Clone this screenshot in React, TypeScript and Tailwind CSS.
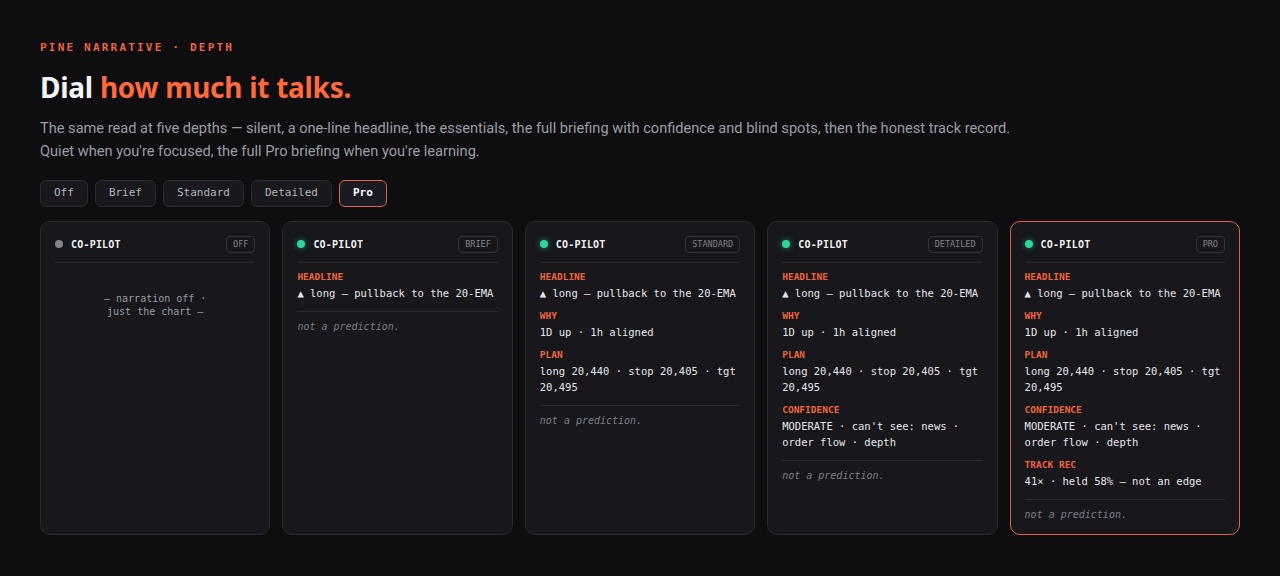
import React from 'react';

const mono = "font-['DejaVu_Sans_Mono','Liberation_Mono',monospace]";

interface Section {
    label: string;
    lines: string[];
}

interface Depth {
    key: string;
    badge: string;
    sections: Section[];
}

const headline: Section = { label: 'HEADLINE', lines: ['▲ long — pullback to the 20-EMA'] };
const why: Section = { label: 'WHY', lines: ['1D up · 1h aligned'] };
const plan: Section = { label: 'PLAN', lines: ['long 20,440 · stop 20,405 · tgt 20,495'] };
const confidence: Section = { label: 'CONFIDENCE', lines: ["MODERATE · can't see: news · order flow · depth"] };
const track: Section = { label: 'TRACK REC', lines: ['41× · held 58% — not an edge'] };

const depths: Depth[] = [
    { key: 'Off', badge: 'OFF', sections: [] },
    { key: 'Brief', badge: 'BRIEF', sections: [headline] },
    { key: 'Standard', badge: 'STANDARD', sections: [headline, why, plan] },
    { key: 'Detailed', badge: 'DETAILED', sections: [headline, why, plan, confidence] },
    { key: 'Pro', badge: 'PRO', sections: [headline, why, plan, confidence, track] },
];

function Card({ depth, active }: { depth: Depth; active: boolean }) {
    const off = depth.key === 'Off';
    return (
        <div
            className={`rounded-[10px] border bg-[#17171c] px-[14px] pt-[14px] pb-[11px] ${
                active ? 'border-[#e0653f]' : 'border-[#2a2a31]'
            }`}
        >
            <div className="flex items-center justify-between pb-[9px] border-b border-[#2c2c33]">
                <div className="flex items-center gap-[8px]">
                    <span
                        className={`w-[8px] h-[8px] rounded-full ${
                            off ? 'bg-[#85858c]' : 'bg-[#2fd49b] shadow-[0_0_6px_rgba(47,212,155,0.6)]'
                        }`}
                    />
                    <span className={`${mono} text-[10px] font-bold text-[#f1f1f3] tracking-[0.02em]`}>CO-PILOT</span>
                </div>
                <span
                    className={`${mono} text-[8.5px] leading-none text-[#808088] border border-[#34343b] rounded-[4px] px-[6px] py-[3.5px]`}
                >
                    {depth.badge}
                </span>
            </div>

            {off ? (
                <div className={`${mono} text-[10px] leading-[13px] text-[#9a9aa2] text-center pt-[29px]`}>
                    — narration off ·<br />just the chart —
                </div>
            ) : (
                <div className={mono}>
                    <div className="pt-[7px] pb-[10px] border-b border-[#2c2c33] flex flex-col gap-[8px]">
                        {depth.sections.map((s) => (
                            <div key={s.label}>
                                <div className="text-[9.5px] font-bold text-[#f0643c] leading-[14px]">{s.label}</div>
                                <div className="text-[10.5px] text-[#e6e6ea] leading-[16px] mt-[1px]">
                                    {s.lines.map((l) => (
                                        <div key={l}>{l}</div>
                                    ))}
                                </div>
                            </div>
                        ))}
                    </div>
                    <div className="pt-[7px] text-[10px] italic text-[#7e7e86] leading-[16px]">not a prediction.</div>
                </div>
            )}
        </div>
    );
}

export default function App() {
    const active = 'Pro';
    return (
        <div className="min-h-[576px] w-full bg-[#0e0e11] px-10 pt-[40px] font-['Noto_Sans','Open_Sans',sans-serif]">
            <div className={`${mono} text-[11px] font-bold tracking-[0.2em] text-[#f0643c]`}>PINE NARRATIVE · DEPTH</div>
            <h1 className="mt-[12px] text-[28px] font-bold leading-[36px] tracking-[-0.01em] text-[#f4f4f6]">
                Dial <span className="text-[#ff6a3d]">how much it talks.</span>
            </h1>
            <p className="mt-[12px] font-['Roboto',sans-serif] text-[14.6px] leading-[23px] text-[#9c9ca4]">
                The same read at five depths — silent, a one-line headline, the essentials, the full briefing with confidence and
                blind spots, then the honest track record.
                <br />
                Quiet when you're focused, the full Pro briefing when you're learning.
            </p>

            <div className="mt-[17px] flex gap-[7px]">
                {depths.map((d) => (
                    <button
                        key={d.key}
                        className={`${mono} h-[27px] px-[13px] rounded-[6px] border text-[11px] ${
                            d.key === active
                                ? 'border-[#e0653f] bg-[#1a1a22] text-white font-bold'
                                : 'border-[#2a2a31] bg-[#18181d] text-[#b4b4bc]'
                        }`}
                    >
                        {d.key}
                    </button>
                ))}
            </div>

            <div className="mt-[14px] grid grid-cols-5 gap-3">
                {depths.map((d) => (
                    <Card key={d.key} depth={d} active={d.key === active} />
                ))}
            </div>
        </div>
    );
}
